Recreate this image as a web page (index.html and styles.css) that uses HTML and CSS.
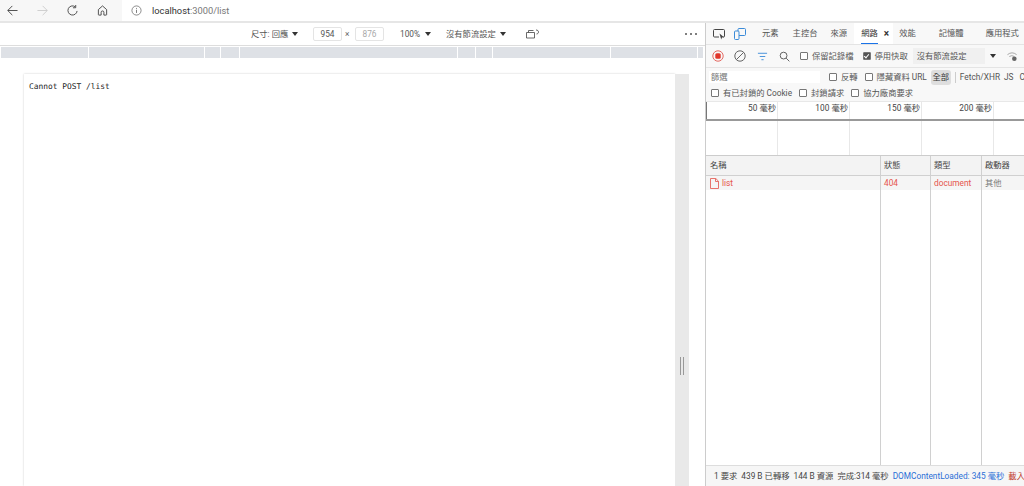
FILE: index.html
```html
<!DOCTYPE html>
<html lang="zh-Hant">
<head>
<meta charset="utf-8">
<title>localhost:3000/list</title>
<link rel="stylesheet" href="styles.css">
</head>
<body>
<header class="browser">
  <div class="nav">
    <svg class="nav-icon" viewBox="0 0 12 12"><path d="M11.500 6H1M5.800 1 .8 6l5 5" fill="none" stroke="#444" stroke-width="1"/></svg>
    <svg class="nav-icon" viewBox="0 0 12 12"><path d="M.5 6H11M6.200 1l5 5-5 5" fill="none" stroke="#ccc" stroke-width="1"/></svg>
    <svg class="nav-icon" viewBox="0 0 12 12"><path d="M11 6.500A5 5 0 1 1 8.800 1.800M9.500 0v3h-3" fill="none" stroke="#444" stroke-width="1"/></svg>
    <svg class="nav-icon" viewBox="0 0 12 12"><path d="M1.500 5 6 1l4.500 4v5.500a.5 .5 0 0 1-.5 .5H7.500V8a1.500 1.500 0 0 0-3 0v3H2a.5 .5 0 0 1-.5-.5Z" fill="none" stroke="#444" stroke-width="1"/></svg>
  </div>
  <div class="address">
    <svg class="info" viewBox="0 0 12 12"><circle cx="6" cy="6" r="5" fill="none" stroke="#666" stroke-width=".8"/><path d="M6 5.200v3.500M6 3.200v1" stroke="#666" stroke-width=".9"/></svg>
    <span class="host">localhost</span><span class="path">:3000/list</span>
  </div>
</header>
<main class="workspace">
  <section class="viewport">
    <div class="device-bar">
      <span class="dev-label">尺寸: 回應</span><i class="caret caret-a"></i>
      <span class="dim">954</span><span class="times">×</span><span class="dim dim-muted">876</span>
      <span class="zoom-label">100%</span><i class="caret caret-b"></i>
      <span class="throttle">沒有節流設定</span><i class="caret caret-c"></i>
      <svg class="rotate" viewBox="0 0 13 10"><path d="M.5 3.500h8v5.500h-8zM2.500 3.500V1.500h5M10 1c1.500 0 2.500 .8 2.500 2S11.500 5 10.500 5" fill="none" stroke="#444" stroke-width=".8"/></svg>
      <span class="more"><i></i><i></i><i></i></span>
    </div>
    <div class="media-bar">
      <span class="seg s87"></span><span class="seg s115"></span><span class="seg s15"></span><span class="seg s18"></span><span class="seg s217"></span><span class="seg s17"></span><span class="seg s16"></span><span class="seg s117"></span><span class="seg s86"></span><span class="seg s5"></span>
    </div>
    <div class="canvas">
      <div class="page"><pre class="message">Cannot POST /list</pre></div>
      <div class="scroll"><span class="grip"></span></div>
    </div>
  </section>
  <section class="devtools">
    <nav class="tabs">
      <svg class="tool-icon" viewBox="0 0 12 12"><path d="M6 9H1.500a1 1 0 0 1-1-1V2.500a1 1 0 0 1 1-1h9a1 1 0 0 1 1 1V8a1 1 0 0 1-1 1h-.5" fill="none" stroke="#444" stroke-width="1"/><path d="M6.500 5.500 11 9.300 9 9.600 8.200 11.500Z" fill="#444"/></svg>
      <svg class="tool-icon tool-icon-2" viewBox="0 0 12 12"><rect x="4" y=".5" width="7.500" height="7" rx="1" fill="none" stroke="#3b8bd8" stroke-width="1"/><rect x=".5" y="3" width="4.500" height="8.500" rx="1" fill="#f8f8f8" stroke="#3b8bd8" stroke-width="1"/></svg>
      <span class="tab t1">元素</span><span class="tab t2">主控台</span><span class="tab t3">來源</span>
      <span class="tab active"><span class="active-label">網路</span><b class="close">×</b></span>
      <span class="tab t5">效能</span><span class="tab t6">記憶體</span><span class="tab t7">應用程式</span>
    </nav>
    <div class="actions">
      <svg class="rec" viewBox="0 0 12 12"><circle cx="6" cy="6" r="5.200" fill="none" stroke="#e46962" stroke-width="1"/><rect x="3.300" y="3.300" width="5.400" height="5.400" rx="1.500" fill="#e0352b"/></svg>
      <svg class="clear" viewBox="0 0 12 12"><circle cx="6" cy="6" r="5.200" fill="none" stroke="#555" stroke-width=".9"/><path d="M2.500 9.500 9.500 2.500" stroke="#555" stroke-width=".9"/></svg>
      <svg class="filter" viewBox="0 0 12 12"><path d="M1 2.500h10M3 6h6M4.800 9.500h2.400" stroke="#3b8bd8" stroke-width="1"/></svg>
      <svg class="search" viewBox="0 0 12 12"><circle cx="5" cy="5" r="3.700" fill="none" stroke="#555" stroke-width="1"/><path d="m7.800 7.800 3.500 3.500" stroke="#555" stroke-width="1"/></svg>
      <label class="check c-log"><i class="box"></i>保留記錄檔</label>
      <label class="check c-cache"><i class="box on"></i>停用快取</label>
      <span class="select">沒有節流設定</span><i class="caret caret-d"></i>
      <svg class="wifi" viewBox="0 0 12 12"><path d="M.5 4a8 8 0 0 1 10 0M2.500 6a5 5 0 0 1 5.500 0" fill="none" stroke="#999" stroke-width=".9"/><circle cx="8" cy="8.500" r="2.500" fill="#666"/></svg>
    </div>
    <div class="filters">
      <span class="filter-input">篩選</span>
      <label class="check c-rev"><i class="box"></i>反轉</label>
      <label class="check c-hide"><i class="box"></i>隱藏資料 URL</label>
      <span class="all">全部</span><i class="sep"></i>
      <span class="kind k-fetch">Fetch/XHR</span><span class="kind k-js">JS</span><span class="kind k-css">C</span>
    </div>
    <div class="filters-2">
      <label class="check c-cookie"><i class="box"></i>有已封鎖的 Cookie</label>
      <label class="check c-block"><i class="box"></i>封鎖請求</label>
      <label class="check c-third"><i class="box"></i>協力廠商要求</label>
    </div>
    <div class="overview">
      <div class="ticks">
        <span class="tick">50 毫秒</span><span class="tick">100 毫秒</span><span class="tick">150 毫秒</span><span class="tick">200 毫秒</span><span class="tick tick-end"></span>
      </div>
      <div class="lanes">
        <span class="tick"></span><span class="tick"></span><span class="tick"></span><span class="tick"></span><span class="tick tick-end"></span>
      </div>
    </div>
    <div class="table">
      <div class="row head">
        <span class="cell name">名稱</span><span class="cell status">狀態</span><span class="cell type">類型</span><span class="cell init">啟動器</span>
      </div>
      <div class="row req">
        <span class="cell name err"><svg class="file" viewBox="0 0 9 11"><path d="M.5 .5H5.800L8.500 3.200V10.500H.5ZM5.500 .5V3.500H8.500" fill="none" stroke="#e5645c" stroke-width=".9"/></svg>list</span><span class="cell status err">404</span><span class="cell type err">document</span><span class="cell init">其他</span>
      </div>
      <div class="row fill">
        <span class="cell name"></span><span class="cell status"></span><span class="cell type"></span><span class="cell init"></span>
      </div>
    </div>
    <footer class="summary">
      <span>1 要求</span><span>439 B 已轉移</span><span>144 B 資源</span><span>完成:314 毫秒</span><span class="dcl">DOMContentLoaded: 345 毫秒</span><span class="load">載入</span>
    </footer>
  </section>
</main>
</body>
</html>
```

FILE: styles.css
```css
* { box-sizing: border-box; }
html, body { margin: 0; height: 100%; }
body {
  width: 1024px; height: 486px; overflow: hidden; display: flex; flex-direction: column;
  background: #fff; color: #555;
  font: 8.3px/1 Roboto, "Noto Sans CJK TC", sans-serif;
}
svg { display: block; flex: none; }
.browser { height: 23px; flex: none; display: flex; background: #f7f7f7; border-bottom: 2px solid #e6e6e6; }
.nav { width: 122px; display: flex; align-items: center; padding-left: 7px; gap: 19px; }
.nav-icon { width: 11px; height: 11px; }
.address { flex: 1; background: #fff; display: flex; align-items: center; padding-left: 9px; font-size: 9.300px; }
.info { width: 11px; height: 11px; margin-right: 10px; }
.host { color: #333; }
.path { color: #777; }
.workspace { flex: 1; min-height: 0; display: flex; }
.viewport { width: 705px; flex: none; display: flex; flex-direction: column; background: #fff; }
.device-bar { height: 23px; flex: none; display: flex; align-items: center; padding-left: 251px; padding-right: 8px; border-bottom: 1px solid #ddd; }
.caret { width: 0; height: 0; flex: none; border: 3px solid transparent; border-top: 4px solid #333; border-bottom: 0; }
.dev-label { width: 37px; white-space: nowrap; }
.caret-a { margin-left: 4px; }
.dim { width: 29px; height: 14px; margin-left: 15px; border: 1px solid #e4e4e4; border-radius: 2px; display: flex; align-items: center; justify-content: center; color: #555; }
.dim-muted { color: #aaa; margin-left: 0; }
.times { width: 13px; margin-left: 0; padding-left: 3px; color: #666; }
.zoom-label { margin-left: 16px; width: 20px; }
.caret-b { margin-left: 5px; }
.throttle { margin-left: 15px; width: 49px; white-space: nowrap; }
.caret-c { margin-left: 5px; }
.rotate { width: 13px; height: 10px; margin-left: 20px; }
.more { margin-left: auto; display: flex; gap: 3px; }
.more i { width: 2px; height: 2px; border-radius: 50%; background: #555; }
.media-bar { height: 13px; flex: none; display: flex; gap: 1px; padding: 1px 1px 0; }
.seg { background: #dee1e6; height: 11px; }
.s87 { width: 87px; } .s115 { width: 115px; } .s15 { width: 15px; } .s18 { width: 18px; } .s217 { width: 217px; }
.s17 { width: 17px; } .s16 { width: 16px; } .s117 { width: 117px; } .s86 { width: 86px; } .s5 { width: 5px; }
.canvas { flex: 1; min-height: 0; display: flex; padding: 15px 16px 0 24px; background: #fff; }
.page { flex: 1; background: #fff; box-shadow: 0 0 2px rgba(0,0,0,.2); padding: 8px 5px; }
.message { margin: 0; font: 7.900px/10px "DejaVu Sans Mono", monospace; color: #222; }
.scroll { width: 14px; background: #e9e9e9; display: flex; align-items: center; justify-content: center; }
.grip { width: 4px; height: 18px; margin-top: 172px; border: 1px solid #999; border-width: 0 1px; }
.devtools { flex: 1; min-width: 0; display: flex; flex-direction: column; border-left: 1px solid #ccc; }
.tabs, .actions, .filters, .filters-2 { background: #f8f8f8; }
.tabs { height: 22px; flex: none; display: flex; align-items: center; padding-left: 7px; border-bottom: 1px solid #e4e4e4; white-space: nowrap; overflow: hidden; }
.tool-icon { width: 12px; height: 12px; }
.tool-icon-2 { margin-left: 9px; }
.tab { flex: none; }
.t1 { margin-left: 16px; } .t2 { margin-left: 14px; } .t3 { margin-left: 13px; }
.active { margin-left: 7px; height: 21px; width: 39px; padding-left: 7px; background: #fff; color: #333; display: flex; align-items: center; }
.active-label { height: 100%; display: flex; align-items: center; border-bottom: 1.500px solid #1a73e8; }
.close { margin-left: 6px; font-size: 10px; color: #333; }
.t5 { margin-left: 6px; } .t6 { margin-left: 23px; } .t7 { margin-left: 22px; }
.actions { height: 23px; flex: none; display: flex; align-items: center; padding-left: 6px; border-bottom: 1px solid #e4e4e4; white-space: nowrap; overflow: hidden; }
.rec, .clear { width: 12px; height: 12px; }
.clear { margin-left: 10px; }
.filter { width: 11px; height: 11px; margin-left: 11px; }
.search { width: 11px; height: 11px; margin-left: 11px; }
.check { display: flex; align-items: center; flex: none; white-space: nowrap; color: #555; }
.box { width: 8px; height: 8px; flex: none; margin-right: 4px; border: 1px solid #777; border-radius: 1px; background: #fff; position: relative; }
.box.on { background: #555; }
.box.on::after { content: ""; position: absolute; left: 1.500px; top: 0; width: 2px; height: 4px; border: solid #fff; border-width: 0 1px 1px 0; transform: rotate(40deg); }
.c-log { margin-left: 10px; }
.c-cache { margin-left: 9px; }
.select { margin-left: 5px; width: 72px; height: 16px; background: #f0f0f0; display: flex; align-items: center; padding-left: 4px; flex: none; }
.caret-d { margin-left: 5px; }
.wifi { width: 11px; height: 11px; margin-left: 11px; }
.filters { height: 18px; flex: none; display: flex; align-items: center; white-space: nowrap; overflow: hidden; padding-left: 3px; }
.filter-input { width: 111px; height: 12px; background: #fff; padding-left: 2px; display: flex; align-items: center; color: #777; flex: none; }
.c-rev { margin-left: 9px; }
.c-hide { margin-left: 7px; }
.all { margin-left: 4px; width: 20px; height: 15px; background: #dedede; border-radius: 3px; display: flex; align-items: center; justify-content: center; flex: none; color: #333; }
.sep { width: 1px; height: 11px; background: #ccc; margin-left: 4px; flex: none; }
.k-fetch { margin-left: 4px; } .k-js { margin-left: 4px; } .k-css { margin-left: 6px; }
.filters-2 { height: 15px; flex: none; display: flex; align-items: center; padding: 0 0 1px 5px; white-space: nowrap; }
.c-block { margin-left: 7px; } .c-third { margin-left: 7px; }
.overview { height: 55px; flex: none; display: flex; flex-direction: column; border-bottom: 1px solid #ccc; border-top: 1px solid #e8e8e8; }
.ticks { height: 19px; display: flex; border-bottom: 2px solid #999; flex: none; }
.lanes { flex: 1; display: flex; }
.tick { width: 72px; flex: none; border-right: 1px solid #e8e8e8; text-align: right; padding: 2px 1px 0 0; color: #444; }
.ticks .tick:first-child { border-left: 1px solid #777; }
.tick-end { flex: 1; border-right: 0; }
.table { flex: 1; min-height: 0; display: flex; flex-direction: column; }
.row { display: flex; flex: none; }
.cell { border-right: 1px solid #d0d0d0; display: flex; align-items: center; padding-left: 3px; }
.name { width: 175px; } .status { width: 50px; } .type { width: 51px; } .init { flex: 1; border-right: 0; }
.head .name { padding-left: 4px; }
.req .name { padding-left: 4px; }
.head { height: 20px; background: #f3f3f3; border-bottom: 1px solid #d0d0d0; }
.head .cell { color: #444; }
.req { height: 14px; background: #f5f5f5; }
.req .init { color: #777; }
.err { color: #e5544b; }
.file { width: 9px; height: 11px; margin-right: 3px; }
.fill { flex: 1; }
.fill .cell { height: 100%; }
.summary { height: 21px; flex: none; display: flex; align-items: center; gap: 4px; padding-left: 8px; background: #f6f6f6; border-top: 1px solid #ddd; white-space: nowrap; overflow: hidden; color: #444; }
.dcl { color: #2a6fd6; }
.load { color: #c0392b; }
```
